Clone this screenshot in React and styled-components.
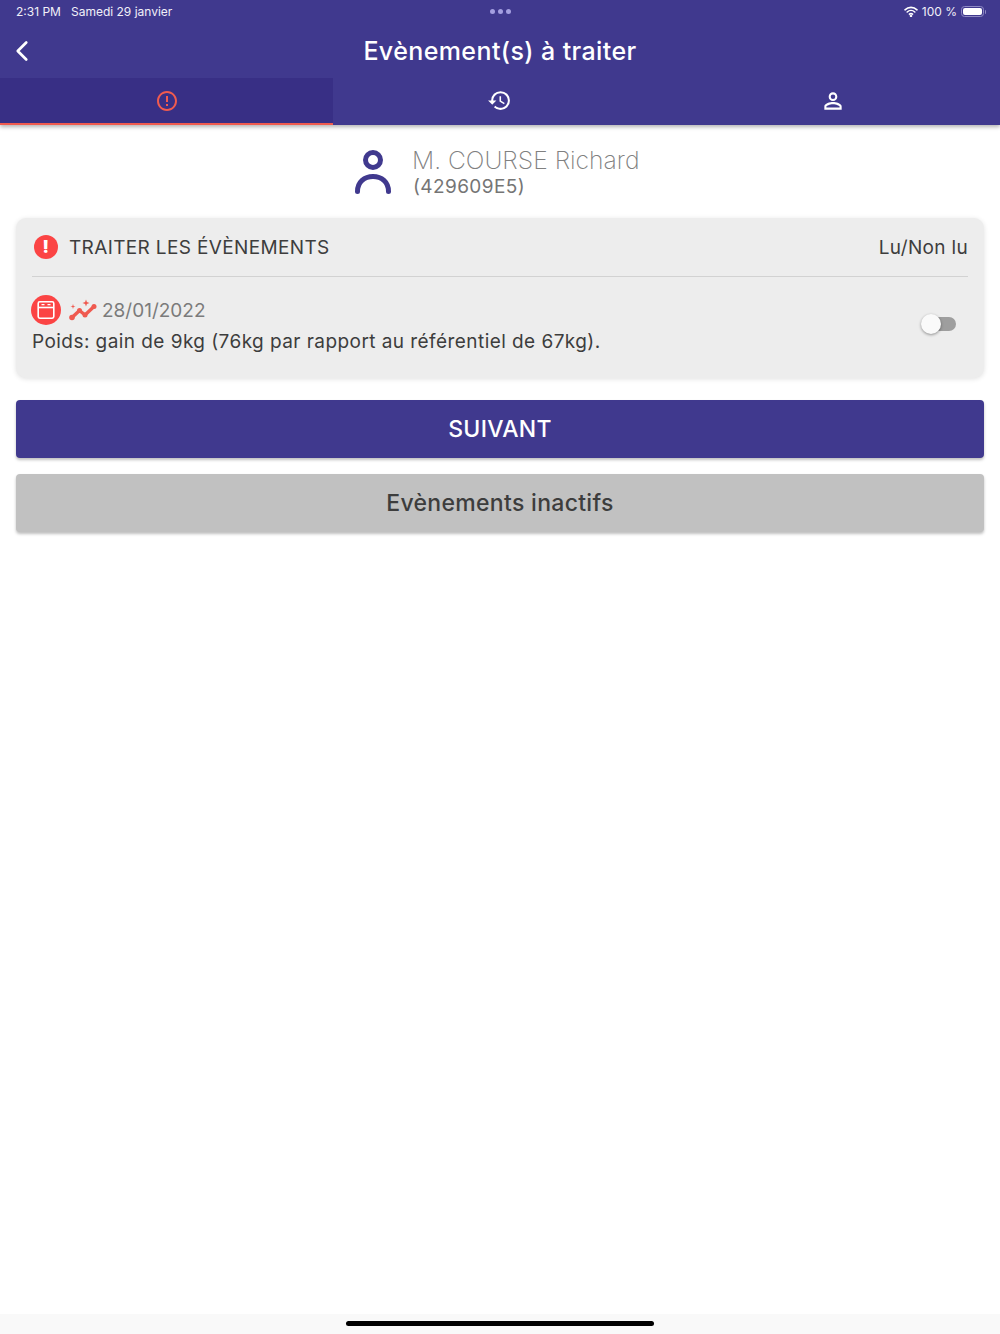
import styled, { createGlobalStyle } from 'styled-components';
import { ChevronLeft } from 'lucide-react';
import { MdErrorOutline, MdHistory, MdPersonOutline } from 'react-icons/md';

const GlobalStyle = createGlobalStyle`
  html, body {
    margin: 0;
    padding: 0;
    background: #fff;
    font-family: Inter, Roboto, "Liberation Sans", sans-serif;
  }
  * { box-sizing: border-box; }
`;

const Page = styled.div`
  width: 1000px;
  height: 1334px;
  display: flex;
  flex-direction: column;
  overflow: hidden;
`;

const Header = styled.header`
  background: #40398e;
  color: #fff;
  box-shadow: 0 2px 4px rgba(0, 0, 0, 0.3);
`;

const StatusBar = styled.div`
  height: 23px;
  padding: 0 15px 0 16px;
  display: grid;
  grid-template-columns: 1fr auto 1fr;
  align-items: center;
  font-size: 12px;
  color: #f1f0f8;
`;

const StatusLeft = styled.div`
  display: flex;
  gap: 10px;
`;

const StatusRight = styled.div`
  display: flex;
  justify-content: flex-end;
  align-items: center;
  gap: 4px;
`;

const Dots = styled.div`
  display: flex;
  gap: 3px;
`;

const Dot = styled.span`
  width: 5px;
  height: 5px;
  border-radius: 50%;
  background: #a49fe0;
`;

const Battery = styled.div`
  position: relative;
  width: 23px;
  height: 11px;
  padding: 1px;
  margin-right: 1px;
  border: 1px solid #8f8ac4;
  border-radius: 3.5px;
  &::before {
    content: '';
    display: block;
    height: 100%;
    background: #fff;
    border-radius: 2px;
  }
  &::after {
    content: '';
    position: absolute;
    right: -3px;
    top: 2.5px;
    width: 1.5px;
    height: 4px;
    background: #8f8ac4;
    border-radius: 0 1px 1px 0;
  }
`;

const TitleBar = styled.div`
  height: 55px;
  position: relative;
  display: flex;
  align-items: center;
  justify-content: center;
`;

const BackButton = styled.div`
  position: absolute;
  left: 5px;
  top: 11px;
  display: flex;
`;

const Title = styled.h1`
  margin: 0;
  font-size: 25px;
  font-weight: 500;
  letter-spacing: 0.4px;
`;

const Tabs = styled.nav`
  height: 47px;
  display: flex;
`;

const Tab = styled.div`
  flex: 1;
  display: flex;
  align-items: center;
  justify-content: center;
  background: ${p => (p.$active ? '#382f85' : 'transparent')};
  border-bottom: 2px solid ${p => (p.$active ? '#f05b4f' : 'transparent')};
  color: ${p => (p.$active ? '#f05b4f' : '#fff')};
`;

const Content = styled.main`
  flex: 1;
  padding: 0 16px;
`;

const Patient = styled.section`
  height: 93px;
  display: flex;
  align-items: center;
  justify-content: center;
  gap: 21px;
`;

const PatientText = styled.div`
  display: flex;
  flex-direction: column;
  width: 233px;
`;

const PatientName = styled.div`
  font-size: 24.7px;
  font-weight: 200;
  line-height: 30px;
  color: #808080;
  white-space: nowrap;
`;

const PatientId = styled.div`
  font-size: 19px;
  line-height: 23px;
  color: #757575;
  letter-spacing: 0.4px;
  padding-left: 1px;
`;

const Card = styled.section`
  height: 160px;
  background: #ededed;
  border-radius: 10px;
  padding: 0 16px;
  box-shadow: 0 1px 5px rgba(0, 0, 0, 0.12);
`;

const CardHeader = styled.div`
  height: 59px;
  display: flex;
  align-items: center;
  justify-content: space-between;
  border-bottom: 1px solid #d2d2d2;
  padding-left: 2px;
`;

const CardTitle = styled.div`
  display: flex;
  align-items: center;
  gap: 11px;
  font-size: 19px;
  color: #3d3d3d;
  letter-spacing: 0.36px;
`;

const ReadLabel = styled.div`
  font-size: 19px;
  color: #3d3d3d;
  letter-spacing: 0.33px;
`;

const AlertBadge = styled.div`
  width: 24px;
  height: 24px;
  border-radius: 50%;
  background: #fb4444;
  color: #fff;
  display: flex;
  align-items: center;
  justify-content: center;
  font-size: 17px;
  font-weight: 900;
`;

const EventRow = styled.div`
  display: flex;
  align-items: center;
  justify-content: space-between;
  padding: 18px 12px 0 0;
  margin-left: -1px;
`;

const EventBody = styled.div`
  display: flex;
  flex-direction: column;
`;

const EventMeta = styled.div`
  display: flex;
  align-items: center;
  gap: 8px;
  height: 30px;
`;

const EventIcon = styled.div`
  width: 30px;
  height: 30px;
  border-radius: 50%;
  background: #fb4444;
  display: flex;
  align-items: center;
  justify-content: center;
`;

const EventDate = styled.span`
  margin-left: -3px;
  font-size: 19px;
  color: #7b7b7b;
  padding-top: 1px;
`;

const EventText = styled.p`
  margin: 4px 0 0 1px;
  font-size: 19px;
  line-height: 26px;
  color: #3d3d3d;
  letter-spacing: 0.44px;
`;

const Toggle = styled.div`
  position: relative;
  width: 26px;
  height: 14px;
  border-radius: 7px;
  background: #9e9e9e;
  margin-top: -2px;
  &::after {
    content: '';
    position: absolute;
    left: -9px;
    top: -3px;
    width: 20px;
    height: 20px;
    border-radius: 50%;
    background: #fafafa;
    box-shadow: 0 1px 3px rgba(0, 0, 0, 0.4);
  }
`;

const Button = styled.div`
  height: 58px;
  margin-top: ${p => p.$gap}px;
  display: flex;
  align-items: center;
  justify-content: center;
  border-radius: 4px;
  font-size: 23px;
  font-weight: 500;
  letter-spacing: 0.3px;
  background: ${p => (p.$muted ? '#c1c1c1' : '#40398e')};
  color: ${p => (p.$muted ? '#3d3d3d' : '#fff')};
  box-shadow: 0 2px 3px rgba(0, 0, 0, 0.25);
`;

const HomeBar = styled.footer`
  height: 20px;
  background: #f9f9f9;
  display: flex;
  justify-content: center;
  padding-top: 7px;
`;

const HomeIndicator = styled.div`
  width: 308px;
  height: 5px;
  border-radius: 3px;
  background: #000;
`;

const WifiIcon = () => (
  <svg width="14" height="11" viewBox="0 0 14 11" fill="none" stroke="#fff" strokeWidth="1.6" strokeLinecap="round">
    <path d="M1 3.8C4.4.6 9.6.6 13 3.8" />
    <path d="M3.2 6c2.2-2 5.4-2 7.6 0" />
    <path d="M5.4 8.1c.9-.7 2.3-.7 3.2 0" />
    <circle cx="7" cy="9.8" r=".5" fill="#fff" />
  </svg>
);

const PersonIcon = () => (
  <svg width="36" height="46" viewBox="0 0 36 46" fill="none" stroke="#40398e" strokeWidth="5" strokeLinecap="round">
    <circle cx="18" cy="11" r="7.5" />
    <path d="M2.5 42.5C2.5 33 9.5 27.5 18 27.5S33.5 33 33.5 42.5" />
  </svg>
);

const OvenIcon = () => (
  <svg width="18" height="18" viewBox="0 0 18 18" fill="none" stroke="#fff" strokeWidth="1.6">
    <rect x="1.2" y="0.8" width="15.6" height="16.4" rx="1.6" />
    <path d="M1.2 6.5h15.600" />
    <path d="M4.500 3.700h3M10.500 3.700h3" strokeWidth="1.300" />
  </svg>
);

const TrendIcon = () => (
  <svg width="28" height="24" viewBox="0 0 28 24" fill="#ef5a50">
    <path d="M3 19.500l7.500-7 5.500 4.500 9-8.500" fill="none" stroke="#ef5a50" strokeWidth="3.400" strokeLinecap="round" strokeLinejoin="round" />
    <circle cx="3" cy="19.500" r="2.800" />
    <circle cx="10.500" cy="12.500" r="2.500" />
    <circle cx="16" cy="17" r="2.500" />
    <circle cx="25" cy="8.500" r="2.500" />
    <path d="M4 6l.6 1.900 1.900.6-1.900.6-.6 1.900-.6-1.900-1.900-.6 1.900-.6z" />
    <path d="M17 1.500l.9 2.600 2.600.9-2.600.9-.9 2.600-.9-2.600-2.600-.9 2.600-.9z" />
  </svg>
);

const App = () => (
  <Page>
    <GlobalStyle />
    <Header>
      <StatusBar>
        <StatusLeft>
          <span>2:31 PM</span>
          <span>Samedi 29 janvier</span>
        </StatusLeft>
        <Dots>
          <Dot />
          <Dot />
          <Dot />
        </Dots>
        <StatusRight>
          <WifiIcon />
          <span>100 %</span>
          <Battery />
        </StatusRight>
      </StatusBar>
      <TitleBar>
        <BackButton>
          <ChevronLeft size={34} strokeWidth={1.9} />
        </BackButton>
        <Title>Evènement(s) à traiter</Title>
      </TitleBar>
      <Tabs>
        <Tab $active>
          <MdErrorOutline size={24} />
        </Tab>
        <Tab>
          <MdHistory size={25} />
        </Tab>
        <Tab>
          <MdPersonOutline size={26} />
        </Tab>
      </Tabs>
    </Header>
    <Content>
      <Patient>
        <PersonIcon />
        <PatientText>
          <PatientName>M. COURSE Richard</PatientName>
          <PatientId>(429609E5)</PatientId>
        </PatientText>
      </Patient>
      <Card>
        <CardHeader>
          <CardTitle>
            <AlertBadge>!</AlertBadge>
            TRAITER LES ÉVÈNEMENTS
          </CardTitle>
          <ReadLabel>Lu/Non lu</ReadLabel>
        </CardHeader>
        <EventRow>
          <EventBody>
            <EventMeta>
              <EventIcon>
                <OvenIcon />
              </EventIcon>
              <TrendIcon />
              <EventDate>28/01/2022</EventDate>
            </EventMeta>
            <EventText>Poids: gain de 9kg (76kg par rapport au référentiel de 67kg).</EventText>
          </EventBody>
          <Toggle />
        </EventRow>
      </Card>
      <Button $gap={22}>SUIVANT</Button>
      <Button $gap={16} $muted>Evènements inactifs</Button>
    </Content>
    <HomeBar>
      <HomeIndicator />
    </HomeBar>
  </Page>
);

export default App;
